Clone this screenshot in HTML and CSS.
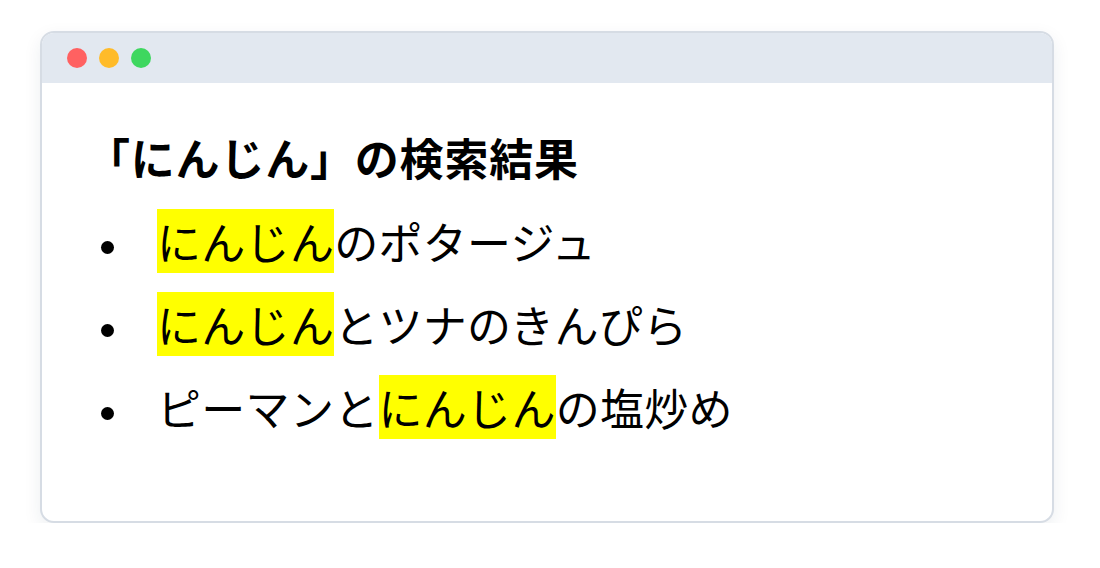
FILE: index.html
```html
<!DOCTYPE html>
<html lang="ja">
<head>
<meta charset="utf-8">
<link rel="stylesheet" href="styles.css">
</head>
<body>
<div class="window">
  <div class="titlebar">
    <span class="dot red"></span>
    <span class="dot yellow"></span>
    <span class="dot green"></span>
  </div>
  <div class="content">
    <h1 class="title">「にんじん」の検索結果</h1>
    <ul class="results">
      <li class="item"><span><mark class="hl">にんじん</mark>のポタージュ</span></li>
      <li class="item"><span><mark class="hl">にんじん</mark>とツナのきんぴら</span></li>
      <li class="item"><span>ピーマンと<mark class="hl">にんじん</mark>の塩炒め</span></li>
    </ul>
  </div>
</div>
</body>
</html>
```

FILE: styles.css
```css
html, body {
  margin: 0;
  padding: 0;
  background: #ffffff;
}
body {
  padding: 31px 46px 0 40px;
  font-family: "Noto Sans CJK JP", "Noto Sans", sans-serif;
  color: #000;
}
.window {
  width: 1010px;
  height: 488px;
  border: 2px solid #d6dce4;
  border-radius: 14px;
  box-shadow: 0 6px 18px rgba(30, 50, 80, 0.08);
  overflow: hidden;
  background: #fff;
  display: flex;
  flex-direction: column;
}
.titlebar {
  height: 50px;
  background: #e2e8f0;
  display: flex;
  align-items: center;
  gap: 12px;
  padding-left: 25px;
  flex-shrink: 0;
}
.dot {
  width: 20px;
  height: 20px;
  border-radius: 50%;
  display: block;
}
.red { background: #ff6161; }
.yellow { background: #ffbb29; }
.green { background: #3ed75f; }
.content {
  padding: 42px 0 0 44px;
}
.title {
  margin: 0;
  font-size: 44px;
  font-weight: 700;
  line-height: normal;
  letter-spacing: 0.8px;
}
.results {
  list-style: none;
  margin: 20px 0 0 0;
  padding: 0;
}
.item {
  display: flex;
  align-items: center;
  font-size: 44px;
  line-height: normal;
  margin-bottom: 19px;
  letter-spacing: 0.3px;
}
.item::before {
  content: "";
  width: 13px;
  height: 13px;
  border-radius: 50%;
  background: #000;
  margin: 12px 0 0 15px;
  margin-right: 43px;
  flex-shrink: 0;
}
.hl {
  background: #ffff00;
  color: inherit;
}
```
